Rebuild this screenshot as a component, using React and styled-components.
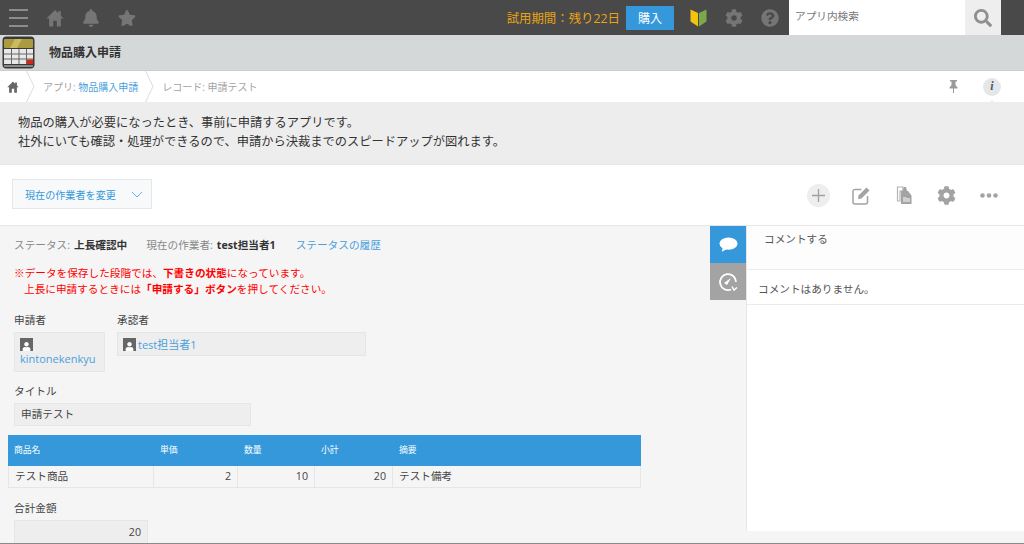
import React from 'react';
import styled, { createGlobalStyle } from 'styled-components';
import { FaBell, FaStar, FaCog, FaQuestionCircle, FaSearch, FaUser } from 'react-icons/fa';

const GlobalStyle = createGlobalStyle`
  html, body { margin: 0; padding: 0; }
  body {
    font-family: "Open Sans", "Noto Sans CJK JP", sans-serif;
    color: #4a4a4a;
    background: #f5f5f5;
  }
  * { box-sizing: border-box; }
`;

const Page = styled.div`
  width: 1024px;
  height: 544px;
  display: flex;
  flex-direction: column;
  overflow: hidden;
  position: relative;
`;

const Header = styled.header`
  height: 35px;
  flex: none;
  background: #494949;
  display: flex;
  align-items: center;
  padding-right: 23px;
`;

const Burger = styled.div`
  width: 19px;
  margin: 0 18px 0 9px;
  display: flex;
  flex-direction: column;
  gap: 6px;
  span { height: 2px; background: #8c8c8c; }
`;

const NavIcons = styled.div`
  display: flex;
  align-items: center;
  gap: 18px;
  color: #757575;
  svg { display: block; }
`;

const Trial = styled.div`
  margin-left: auto;
  color: #e8a313;
  font-size: 12.4px;
  white-space: nowrap;
`;

const BuyButton = styled.div`
  width: 48px;
  height: 24px;
  margin-left: 6px;
  background: #3498db;
  color: #fff;
  font-size: 12px;
  display: flex;
  align-items: center;
  justify-content: center;
`;

const HeaderIcons = styled.div`
  display: flex;
  align-items: center;
  margin: 0 10px 0 16px;
  gap: 18px;
  color: #757575;
  font-size: 18px;
  svg { display: block; }
`;

const SearchBox = styled.div`
  width: 212px;
  height: 35px;
  display: flex;
  background: #fff;
`;

const SearchText = styled.div`
  flex: 1;
  padding-left: 6px;
  font-size: 10.65px;
  line-height: 33px;
  color: #777;
`;

const SearchButton = styled.div`
  width: 36px;
  background: #eeeeee;
  color: #8f8f8f;
  font-size: 18px;
  display: flex;
  align-items: center;
  justify-content: center;
`;

const AppBar = styled.div`
  height: 36px;
  flex: none;
  background: #d4d8d9;
  display: flex;
  align-items: center;
  padding-left: 2px;
  border-bottom: 1px solid #c9cdce;
`;

const AppName = styled.h1`
  margin: 0 0 2px 14px;
  font-size: 12px;
  font-weight: 700;
  color: #333;
`;

const Crumbs = styled.nav`
  height: 31px;
  flex: none;
  background: #fff;
  display: flex;
  align-items: center;
  font-size: 10px;
  color: #a3a3a3;
  padding-left: 7px;
  svg { display: block; }
`;

const CrumbHome = styled.span`
  color: #666;
`;

const Chevron = styled.svg`
  width: 9px;
  height: 31px;
  margin: 0 8px 0 7px;
`;

const Link = styled.span`
  color: #4b9fdc;
`;

const CrumbActions = styled.div`
  margin-left: auto;
  display: flex;
  align-items: center;
  gap: 25px;
  padding-right: 23px;
  color: #9a9a9a;
`;

const InfoBadge = styled.div`
  width: 18px;
  height: 18px;
  border-radius: 50%;
  background: #e3e7e8;
  color: #555;
  font: italic 700 12px "Liberation Serif", serif;
  display: flex;
  align-items: center;
  justify-content: center;
  position: relative;
  &::after {
    content: '';
    position: absolute;
    bottom: -8px;
    left: 5px;
    border: 4px solid transparent;
    border-bottom-color: #ededed;
  }
`;

const Description = styled.div`
  height: 62px;
  flex: none;
  background: #ededed;
  padding: 11px 18px;
  font-size: 12.25px;
  line-height: 19px;
  color: #333;
`;

const Toolbar = styled.div`
  height: 62px;
  flex: none;
  background: #fff;
  border-top: 1px solid #e6e6e6;
  border-bottom: 1px solid #e6e6e6;
  display: flex;
  align-items: center;
  padding: 0 24px 0 12px;
`;

const ActionSelect = styled.div`
  width: 140px;
  height: 30px;
  margin-bottom: 2px;
  background: #f7f9fa;
  border: 1px solid #e3e7e8;
  display: flex;
  align-items: center;
  justify-content: space-between;
  padding: 0 8px 0 12px;
  font-size: 10.1px;
  color: #3498db;
`;

const ToolIcons = styled.div`
  margin-left: auto;
  display: flex;
  align-items: center;
  gap: 19.5px;
  color: #a3a3a3;
  font-size: 19px;
  svg { display: block; }
`;

const ToolSlot = styled.div`
  width: 23px;
  height: 23px;
  display: flex;
  align-items: center;
  justify-content: center;
  border-radius: 50%;
  background: ${(p) => (p.$filled ? '#eeeeee' : 'transparent')};
`;

const Body = styled.div`
  flex: 1;
  display: flex;
  min-height: 0;
`;

const Main = styled.main`
  width: 710px;
  flex: none;
  padding: 11px 0 0 14px;
  font-size: 10.65px;
`;

const StatusRow = styled.div`
  display: flex;
  align-items: baseline;
  height: 16px;
  line-height: 16px;
  color: #888;
  white-space: nowrap;
  b { color: #333; margin-left: 4px; }
`;

const StatusItem = styled.span`
  margin-right: ${(p) => p.$gap}px;
`;

const Notice = styled.div`
  margin-top: 12px;
  color: #f00;
  line-height: 16px;
  white-space: nowrap;
`;

const NoticeLine = styled.div`
  padding-left: ${(p) => (p.$indent ? 10 : 0)}px;
`;

const FieldRow = styled.div`
  display: flex;
  gap: 12px;
`;

const Field = styled.div`
  margin-top: ${(p) => p.$top}px;
`;

const FieldLabel = styled.div`
  height: 12px;
  line-height: ${(p) => (p.$tight ? 11 : 12)}px;
  margin-bottom: ${(p) => (p.$tight ? 5 : 6)}px;
  color: #444;
`;

const ValueBox = styled.div`
  width: ${(p) => p.$w}px;
  height: ${(p) => p.$h}px;
  background: #eeeeee;
  border: 1px solid #e6e6e6;
  padding: ${(p) => (p.$user ? '4px 5px' : '0 6px')};
  line-height: ${(p) => (p.$user ? '14px' : `${p.$h - 2}px`)};
  text-align: ${(p) => (p.$right ? 'right' : 'left')};
  color: #444;
`;

const UserLine = styled.div`
  display: flex;
  align-items: center;
  gap: 2px;
  height: 15px;
`;

const UserName = styled(Link)`
  font-size: 11px;
`;

const Avatar = styled.span`
  width: 13px;
  height: 13px;
  background: #666;
  color: #fff;
  font-size: 9px;
  display: flex;
  align-items: flex-end;
  justify-content: center;
`;

const TableWrap = styled.div`
  width: 633px;
  margin: 9px 0 0 -6px;
`;

const Row = styled.div`
  display: grid;
  grid-template-columns: ${(p) => (p.$body ? '144px' : '146px')} 84px 77px 78px 1fr;
  border: ${(p) => (p.$body ? '1px solid #e6e6e6' : '0')};
  border-top: 0;
`;

const HeadCell = styled.div`
  height: 31px;
  background: #3498db;
  color: #fff;
  font-size: 8.8px;
  line-height: 31px;
  padding-left: 6px;
`;

const Cell = styled.div`
  height: 21px;
  line-height: 21px;
  padding: 0 6px;
  color: #444;
  text-align: ${(p) => (p.$num ? 'right' : 'left')};
  & + & { border-left: 1px solid #e6e6e6; }
`;

const SideTabs = styled.div`
  width: 36px;
  flex: none;
`;

const SideTab = styled.div`
  height: 37px;
  background: ${(p) => (p.$active ? '#3498db' : '#a3a3a3')};
  color: #fff;
  display: flex;
  align-items: center;
  justify-content: center;
`;

const Sidebar = styled.aside`
  flex: 1;
  height: 305px;
  background: #fff;
  border-left: 1px solid #e6e6e6;
  font-size: 10.65px;
`;

const CommentBox = styled.div`
  height: 44px;
  padding: 5px 0 0 17px;
  line-height: 16px;
  background: #fdfdfd;
  border-bottom: 1px solid #ebebeb;
  color: #555;
`;

const EmptyComment = styled.div`
  height: 35px;
  padding: 11px 0 0 11px;
  line-height: 16px;
  border-bottom: 1px solid #ebebeb;
  color: #555;
`;

const BottomLine = styled.div`
  position: absolute;
  left: 0;
  right: 0;
  bottom: 0;
  height: 1px;
  background: #8a8a8a;
`;

const HomeIcon = ({ size }) => (
  <svg width={size} height={size} viewBox="0 0 20 20" fill="currentColor">
    <path d="M10 1L0.500 10.500H3.500V19.500H8V13H12V19.500H16.500V10.500H19.500L16.500 7.500V2.500H13.500V4.500z" />
  </svg>
);

const CalculatorIcon = () => (
  <svg width="33" height="33" viewBox="0 0 33 33">
    <rect x="0.5" y="0.5" width="32" height="32" rx="4" fill="#3a3a3a" />
    <rect x="2" y="3" width="29" height="9" rx="1" fill="#ab9b40" />
    <path d="M13 3h7l-5 9H8z" fill="#c9bb5f" />
    <rect x="2" y="13" width="29" height="15" fill="#e8e8e8" />
    <path d="M2 18h29M2 23h29M9.500 13v15M17 13v15M24.500 13v15" stroke="#666" strokeWidth="1" />
    <rect x="25" y="23.500" width="6" height="4.500" fill="#d3271b" />
    <rect x="2" y="29" width="29" height="2" fill="#8a8a8a" />
  </svg>
);

const BeginnerIcon = () => (
  <svg width="17" height="18" viewBox="0 0 17 18">
    <path d="M0.500 0.500l7.500 3.500V17.500L0.500 12.500z" fill="#f2c40f" />
    <path d="M16.500 0.500L9 4V17.500l7.500-5z" fill="#79a94a" />
  </svg>
);

const PinIcon = () => (
  <svg width="9" height="13" viewBox="0 0 9 13" fill="currentColor">
    <path d="M1 0h7v1.500H6.500V5L8.500 7.500V8.500H5V13H4V8.500H0.500V7.500L2.500 5V1.500H1z" />
  </svg>
);

const EditIcon = () => (
  <svg width="19" height="19" viewBox="0 0 19 19" fill="none" stroke="currentColor" strokeWidth="1.5">
    <path d="M15.500 10v6a2 2 0 0 1-2 2H3a2 2 0 0 1-2-2V5.500a2 2 0 0 1 2-2h6.500" />
    <path d="M6.500 9.500L14.500 1.500l3 3-8 8-3.500.5z" fill="currentColor" stroke="none" />
  </svg>
);

const CopyIcon = () => (
  <svg width="16" height="19" viewBox="0 0 16 19" fill="currentColor">
    <path d="M1.500 1H7v4H4v10H1.500z" fill="none" stroke="#b5b5b5" strokeWidth="1.200" />
    <path d="M5 5h1.500L8 1l2 0 1 4h1l3.500 4.500V18H5z" />
    <path d="M7 11h3l1 1h3v4H7z" fill="#d0d0d0" />
  </svg>
);

const PlusIcon = () => (
  <svg width="13" height="13" viewBox="0 0 13 13" stroke="#a0a0a0" strokeWidth="1.3">
    <path d="M6.500 0v13M0 6.500h13" />
  </svg>
);

const DotsIcon = () => (
  <svg width="18" height="5" viewBox="0 0 18 5" fill="currentColor">
    <circle cx="2.500" cy="2.500" r="2.300" />
    <circle cx="9" cy="2.500" r="2.300" />
    <circle cx="15.500" cy="2.500" r="2.300" />
  </svg>
);

const SelectArrow = () => (
  <svg width="12" height="7" viewBox="0 0 12 7" fill="none" stroke="#6cb3e4" strokeWidth="1">
    <path d="M1 1l5 5 5-5" />
  </svg>
);

const BubbleIcon = () => (
  <svg width="19" height="17" viewBox="0 0 20 17" fill="#fff">
    <ellipse cx="10" cy="7.500" rx="9.500" ry="6.500" />
    <path d="M4 11l-1 5 6-3z" />
  </svg>
);

const HistoryIcon = () => (
  <svg width="20" height="20" viewBox="0 0 20 20" fill="none" stroke="#fff" strokeWidth="1.800">
    <path d="M13 17.500A8 8 0 1 1 18 10" />
    <path d="M6 11l7-5-4 7z" fill="#fff" stroke="none" />
    <path d="M14 14.500l2 3.500 3-2.500" strokeWidth="1.500" />
  </svg>
);

const CrumbChevron = () => (
  <Chevron viewBox="0 0 9 31" fill="none" stroke="#dcdcdc">
    <path d="M0.500 0L8 15.500 0.500 31" />
  </Chevron>
);

export default function App() {
  return (
    <Page>
      <GlobalStyle />
      <Header>
        <Burger>
          <span />
          <span />
          <span />
        </Burger>
        <NavIcons>
          <HomeIcon size={18} />
          <FaBell size={18} />
          <FaStar size={18} />
        </NavIcons>
        <Trial>試用期間：残り22日</Trial>
        <BuyButton>購入</BuyButton>
        <HeaderIcons>
          <BeginnerIcon />
          <FaCog />
          <FaQuestionCircle />
        </HeaderIcons>
        <SearchBox>
          <SearchText>アプリ内検索</SearchText>
          <SearchButton>
            <FaSearch />
          </SearchButton>
        </SearchBox>
      </Header>

      <AppBar>
        <CalculatorIcon />
        <AppName>物品購入申請</AppName>
      </AppBar>

      <Crumbs>
        <CrumbHome>
          <HomeIcon size={12} />
        </CrumbHome>
        <CrumbChevron />
        <span>
          アプリ: <Link>物品購入申請</Link>
        </span>
        <CrumbChevron />
        <span>レコード: 申請テスト</span>
        <CrumbActions>
          <PinIcon />
          <InfoBadge>i</InfoBadge>
        </CrumbActions>
      </Crumbs>

      <Description>
        物品の購入が必要になったとき、事前に申請するアプリです。
        <br />
        社外にいても確認・処理ができるので、申請から決裁までのスピードアップが図れます。
      </Description>

      <Toolbar>
        <ActionSelect>
          現在の作業者を変更
          <SelectArrow />
        </ActionSelect>
        <ToolIcons>
          <ToolSlot $filled>
            <PlusIcon />
          </ToolSlot>
          <ToolSlot>
            <EditIcon />
          </ToolSlot>
          <ToolSlot>
            <CopyIcon />
          </ToolSlot>
          <ToolSlot>
            <FaCog />
          </ToolSlot>
          <ToolSlot>
            <DotsIcon />
          </ToolSlot>
        </ToolIcons>
      </Toolbar>

      <Body>
        <Main>
          <StatusRow>
            <StatusItem $gap={19}>
              ステータス:<b>上長確認中</b>
            </StatusItem>
            <StatusItem $gap={20}>
              現在の作業者:<b>test担当者1</b>
            </StatusItem>
            <Link>ステータスの履歴</Link>
          </StatusRow>

          <Notice>
            <NoticeLine>
              ※データを保存した段階では、<b>下書きの状態</b>になっています。
            </NoticeLine>
            <NoticeLine $indent>
              上長に申請するときには<b>「申請する」ボタン</b>を押してください。
            </NoticeLine>
          </Notice>

          <FieldRow>
            <Field $top={18}>
              <FieldLabel $tight>申請者</FieldLabel>
              <ValueBox $w={91} $h={40} $user>
                <UserLine>
                  <Avatar>
                    <FaUser />
                  </Avatar>
                </UserLine>
                <UserName>kintonekenkyu</UserName>
              </ValueBox>
            </Field>
            <Field $top={18}>
              <FieldLabel $tight>承認者</FieldLabel>
              <ValueBox $w={249} $h={24} $user>
                <UserLine>
                  <Avatar>
                    <FaUser />
                  </Avatar>
                  <UserName>test担当者1</UserName>
                </UserLine>
              </ValueBox>
            </Field>
          </FieldRow>

          <Field $top={13}>
            <FieldLabel>タイトル</FieldLabel>
            <ValueBox $w={237} $h={23}>申請テスト</ValueBox>
          </Field>

          <TableWrap>
            <Row>
              <HeadCell>商品名</HeadCell>
              <HeadCell>単価</HeadCell>
              <HeadCell>数量</HeadCell>
              <HeadCell>小計</HeadCell>
              <HeadCell>摘要</HeadCell>
            </Row>
            <Row $body>
              <Cell>テスト商品</Cell>
              <Cell $num>2</Cell>
              <Cell $num>10</Cell>
              <Cell $num>20</Cell>
              <Cell>テスト備考</Cell>
            </Row>
          </TableWrap>

          <Field $top={14}>
            <FieldLabel>合計金額</FieldLabel>
            <ValueBox $w={134} $h={25} $right>20</ValueBox>
          </Field>
        </Main>

        <SideTabs>
          <SideTab $active>
            <BubbleIcon />
          </SideTab>
          <SideTab>
            <HistoryIcon />
          </SideTab>
        </SideTabs>

        <Sidebar>
          <CommentBox>コメントする</CommentBox>
          <EmptyComment>コメントはありません。</EmptyComment>
        </Sidebar>
      </Body>
      <BottomLine />
    </Page>
  );
}
